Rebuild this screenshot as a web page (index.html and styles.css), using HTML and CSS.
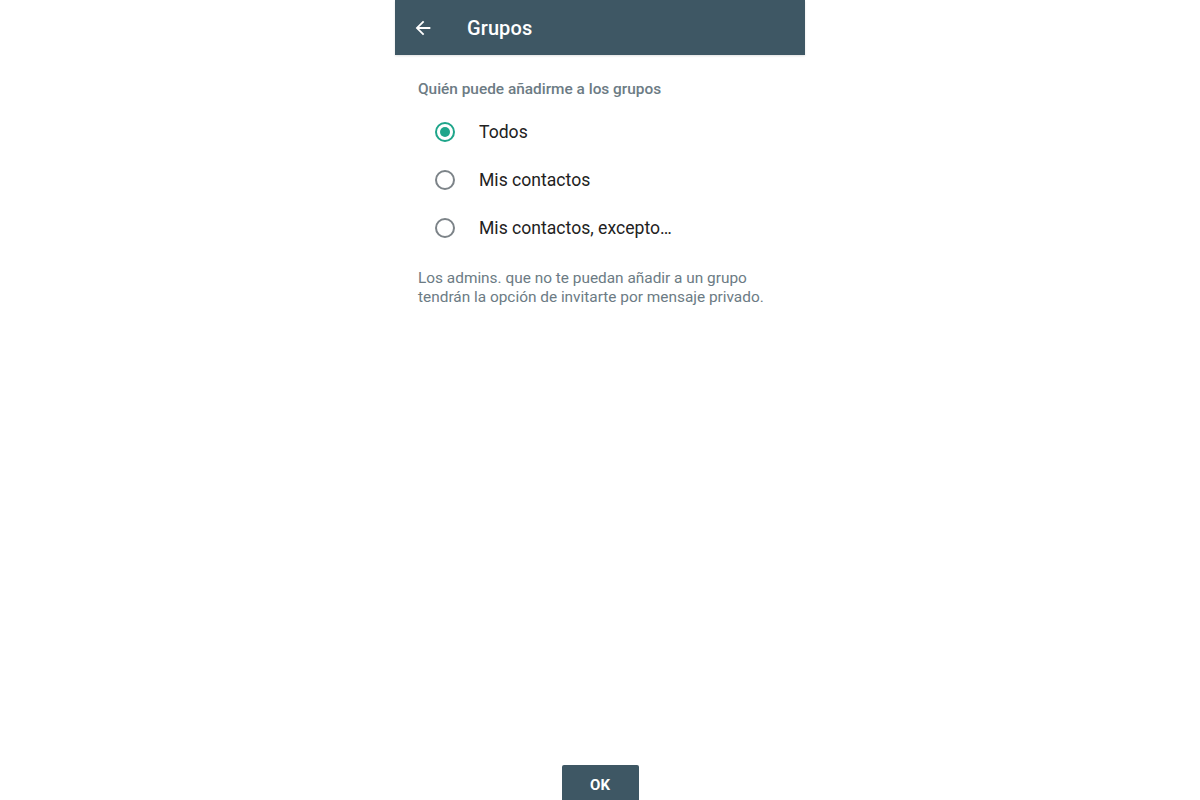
FILE: index.html
```html
<!DOCTYPE html>
<html lang="es">
<head>
<meta charset="utf-8">
<title>Grupos</title>
<link rel="stylesheet" href="styles.css">
</head>
<body>
<div class="phone">
  <header class="appbar">
    <span class="back">
      <svg width="22" height="22" viewBox="0 0 24 24"><path d="M20 11H7.83l5.59-5.59L12 4l-8 8 8 8 1.41-1.41L7.83 13H20v-2z" fill="#fff"/></svg>
    </span>
    <h1 class="title">Grupos</h1>
  </header>
  <main class="content">
    <p class="section">Quién puede añadirme a los grupos</p>
    <ul class="options">
      <li class="option"><span class="radio checked"></span><span class="label">Todos</span></li>
      <li class="option"><span class="radio"></span><span class="label">Mis contactos</span></li>
      <li class="option"><span class="radio"></span><span class="label">Mis contactos, excepto…</span></li>
    </ul>
    <p class="note">Los admins. que no te puedan añadir a un grupo tendrán la opción de invitarte por mensaje privado.</p>
  </main>
  <div class="footer"><button class="ok">OK</button></div>
</div>
</body>
</html>
```

FILE: styles.css
```css
* { box-sizing: border-box; }
html, body { margin: 0; padding: 0; background: #fff; }
body { font-family: Roboto, "Noto Sans", sans-serif; height: 800px; overflow: hidden; }
.phone {
  width: 410px;
  height: 800px;
  margin: 0 auto;
  display: flex;
  flex-direction: column;
}
.appbar {
  height: 55px;
  background: #3e5764;
  display: flex;
  align-items: center;
  padding-left: 17px;
  box-shadow: 0 1px 2px rgba(0,0,0,0.12);
}
.back { display: flex; width: 22px; height: 22px; }
.title {
  margin: 0 0 0 33px;
  color: #fff;
  font-size: 20px;
  font-weight: 500;
  letter-spacing: 0.1px;
}
.content { padding: 0 23px; flex: 1; }
.section {
  margin: 25px 0 0;
  font-size: 15.4px;
  color: #6c7b84;
  font-weight: 500;
  line-height: 18px;
}
.options { list-style: none; margin: 10px 0 0; padding: 0 0 0 17px; }
.option { display: flex; align-items: center; height: 48px; }
.radio {
  width: 20px; height: 20px;
  border: 2px solid #7c8388;
  border-radius: 50%;
  margin-right: 24px;
  display: flex; align-items: center; justify-content: center;
}
.radio.checked { border-color: #1ea58a; }
.radio.checked::after {
  content: ""; width: 10px; height: 10px; border-radius: 50%; background: #1ea58a;
}
.label { font-size: 17.6px; color: #222; }
.note {
  margin: 17px 0 0;
  font-size: 15.4px;
  line-height: 19px;
  color: #6c7b84;
  width: 364px;
}
.footer { display: flex; justify-content: center; }
.ok {
  width: 77px; height: 40px;
  margin-bottom: -5px;
  background: #3e5764;
  color: #fff;
  border: none;
  border-radius: 2px;
  font-family: Roboto, sans-serif;
  font-size: 15px;
  font-weight: 700;
  padding: 0;
}
```
